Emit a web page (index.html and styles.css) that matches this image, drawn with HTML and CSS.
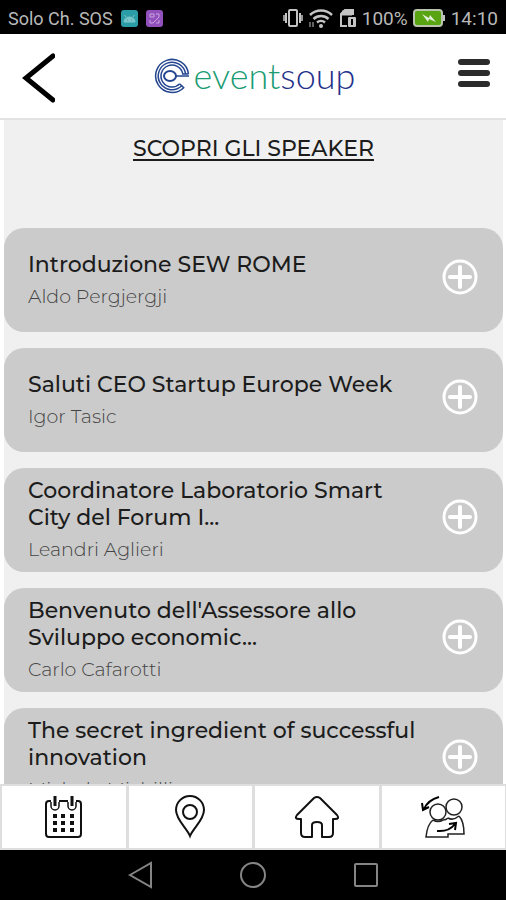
FILE: index.html
```html
<!DOCTYPE html>
<html lang="it">
<head>
    <meta charset="UTF-8">
    <meta name="viewport" content="width=device-width, initial-scale=1.0">
    <title>eventsoup - Speaker</title>
    <link rel="stylesheet" href="styles.css">
</head>
<body>
    <div class="status-bar">
        <span>Solo Ch. SOS</span>
        <svg class="app-icon" width="17" height="17" viewBox="0 0 17 17">
            <rect width="17" height="17" rx="3" fill="#2b9da6"/>
            <path d="M3 12a5.500 5 0 0 1 11 0zM5 7L3.500 5M12 7l1.500-2" fill="#7cc5ca" stroke="#7cc5ca"/>
            <path d="M6 10h1M10 10h1" stroke="#2b9da6"/>
        </svg>
        <svg class="app-icon" width="17" height="17" viewBox="0 0 17 17">
            <rect width="17" height="17" rx="3" fill="#9150bb"/>
            <path d="M4 4h4v3H4zM10 4h3v3M4 10v3h3l6-6M10 13h3v-3" fill="none" stroke="#caa5df"/>
        </svg>
        <div class="status-right">
            <svg width="20" height="18" viewBox="0 0 20 18" fill="none" stroke="#c4c4c4" stroke-width="2">
                <rect x="6" y="1" width="8" height="16" rx="1"/>
                <path d="M3 4v10M17 4v10" stroke-width="2"/>
                <path d="M1 6v6M19 6v6" stroke-width="1.500"/>
            </svg>
            <svg width="26" height="19" viewBox="0 0 26 19" fill="none" stroke="#c4c4c4" stroke-width="2.500">
                <path d="M2 6a16 16 0 0 1 22 0M5.500 10a11 11 0 0 1 15 0M9 13.500a6 6 0 0 1 8 0"/>
                <circle cx="13" cy="17" r="2" fill="#c4c4c4" stroke="none"/>
                <path d="M2 13v5M5 18v-5" stroke-width="1"/>
            </svg>
            <svg width="18" height="19" viewBox="0 0 18 19" fill="none" stroke="#c4c4c4" stroke-width="2">
                <path d="M8 17H2V5l4-4h8v5"/>
                <path d="M3 4h10" stroke-width="5"/>
                <rect x="9" y="8" width="8" height="10" rx="1" fill="#c4c4c4" stroke="none"/>
                <path d="M13 10v6" stroke="#000"/>
            </svg>
            <span>100%</span>
            <svg width="33" height="18" viewBox="0 0 33 18">
                <rect x="1" y="1" width="28" height="16" rx="3" fill="#58a511" stroke="#b9c4ae" stroke-width="2"/>
                <path d="M31 6v6" stroke="#c4c4c4" stroke-width="2"/>
                <path d="M9 5l7 4 1-3 6 7-7-3-1 3z" fill="#e4edda"/>
            </svg>
            <span>14:10</span>
        </div>
    </div>

    <header class="header">
        <button class="icon-btn" aria-label="Indietro">
            <svg width="34" height="50" viewBox="0 0 34 50" fill="none" stroke="#000" stroke-width="5" stroke-linecap="round">
                <path d="M32 3L5 25l27 22"/>
            </svg>
        </button>
        <a class="logo" href="#">
            <svg width="36" height="36" viewBox="0 0 36 36" fill="none" stroke="#24458f" stroke-width="1.500">
                <path d="M34.500 16A16.500 16.500 0 1 0 29.700 29.700L26 26"/>
                <path d="M31.600 16A13.750 13.750 0 1 0 27.700 27.700"/>
                <path d="M34.500 16H28.800A11 11 0 1 0 25.800 25.800"/>
                <ellipse cx="16" cy="18" rx="6" ry="5" stroke-width="2"/>
                <path d="M22 18h13"/>
            </svg>
            <span class="logo-event">event<span class="logo-soup">soup</span></span>
        </a>
        <button class="icon-btn" aria-label="Menu">
            <svg width="32" height="30" viewBox="0 0 32 30" stroke="#2b2b2b" stroke-width="6" stroke-linecap="round">
                <path d="M3 4h26M3 15h26M3 26h26"/>
            </svg>
        </button>
    </header>

    <main class="content">
        <a class="page-title" href="#">SCOPRI GLI SPEAKER</a>

        <div class="card">
            <div class="card-text">
                <h2>Introduzione SEW ROME</h2>
                <p>Aldo Pergjergji</p>
            </div>
            <button class="icon-btn" aria-label="Apri Introduzione SEW ROME">
                <svg class="plus" viewBox="0 0 36 36"><circle cx="18" cy="18" r="16"/><path d="M18 8v20M8 18h20"/></svg>
            </button>
        </div>

        <div class="card">
            <div class="card-text">
                <h2>Saluti CEO Startup Europe Week</h2>
                <p>Igor Tasic</p>
            </div>
            <button class="icon-btn" aria-label="Apri Saluti CEO Startup Europe Week">
                <svg class="plus" viewBox="0 0 36 36"><circle cx="18" cy="18" r="16"/><path d="M18 8v20M8 18h20"/></svg>
            </button>
        </div>

        <div class="card">
            <div class="card-text">
                <h2>Coordinatore Laboratorio Smart City del Forum I...</h2>
                <p>Leandri Aglieri</p>
            </div>
            <button class="icon-btn" aria-label="Apri Coordinatore Laboratorio Smart City">
                <svg class="plus" viewBox="0 0 36 36"><circle cx="18" cy="18" r="16"/><path d="M18 8v20M8 18h20"/></svg>
            </button>
        </div>

        <div class="card">
            <div class="card-text">
                <h2>Benvenuto dell'Assessore allo Sviluppo economic...</h2>
                <p>Carlo Cafarotti</p>
            </div>
            <button class="icon-btn" aria-label="Apri Benvenuto dell'Assessore">
                <svg class="plus" viewBox="0 0 36 36"><circle cx="18" cy="18" r="16"/><path d="M18 8v20M8 18h20"/></svg>
            </button>
        </div>

        <div class="card">
            <div class="card-text">
                <h2>The secret ingredient of successful innovation</h2>
                <p>Michele Michilli</p>
            </div>
            <button class="icon-btn" aria-label="Apri The secret ingredient">
                <svg class="plus" viewBox="0 0 36 36"><circle cx="18" cy="18" r="16"/><path d="M18 8v20M8 18h20"/></svg>
            </button>
        </div>
    </main>

    <nav class="tab-bar">
        <a href="#" aria-label="Agenda">
            <svg width="44" height="44" viewBox="0 0 44 44" fill="none" stroke="#111" stroke-width="2">
                <path d="M9 6H7a3 3 0 0 0-3 3v30a3 3 0 0 0 3 3h29a3 3 0 0 0 3-3V9a3 3 0 0 0-3-3h-2M17 6h9"/>
                <path d="M9 7v4a4 4 0 0 0 8 0V7M26 7v4a4 4 0 0 0 8 0V7" stroke-width="1.500"/>
                <path d="M13 1v10M30 1v10" stroke-width="3"/>
                <path d="M11 21h4M19 21h4M28 21h4M11 28h4M19 28h4M28 28h4M11 35h4M19 35h4M28 35h4" stroke-width="4"/>
            </svg>
        </a>
        <a href="#" aria-label="Mappa">
            <svg width="44" height="44" viewBox="0 0 44 44" fill="none" stroke="#111" stroke-width="2">
                <path d="M22 41C19 33 8 25 8 15a14 14 0 0 1 28 0c0 10-11 18-14 26z"/>
                <circle cx="22" cy="17" r="7"/>
            </svg>
        </a>
        <a href="#" aria-label="Home">
            <svg width="46" height="44" viewBox="0 0 46 44" fill="none" stroke="#111" stroke-width="2" stroke-linejoin="round">
                <path d="M20 3q3-2 6 0l17 17q3 4-2 4h-2v14q0 4-4 4h-7V30q0-3-5-3t-5 3v12h-7q-4 0-4-4V24H5q-5 0-2-4z"/>
            </svg>
        </a>
        <a href="#" aria-label="Networking">
            <svg width="44" height="44" viewBox="0 0 44 44" fill="none" stroke="#222" stroke-width="1.500">
                <circle cx="17" cy="17" r="8"/>
                <circle cx="33" cy="12" r="8"/>
                <path d="M12 25c-4 3-6 7-7 17h22v-3h16c0-9-1-14-5-18M12 25q5 3 10 0M22 25q3 0 5-2M27 23q5 3 11-2"/>
                <path d="M18 2Q7 5 3 14M1 8l1 7 6-3M16 36q12 1 18-7M28 29l7-1-1 7" stroke="#000" stroke-width="2"/>
            </svg>
        </a>
    </nav>

    <div class="android-nav">
        <button class="icon-btn" aria-label="Back">
            <svg width="26" height="28" viewBox="0 0 26 28"><path d="M3 14L24 2v24z"/></svg>
        </button>
        <button class="icon-btn" aria-label="Home">
            <svg width="28" height="28" viewBox="0 0 28 28"><circle cx="14" cy="14" r="12"/></svg>
        </button>
        <button class="icon-btn" aria-label="Recenti">
            <svg width="26" height="26" viewBox="0 0 26 26"><rect x="2" y="2" width="22" height="22" rx="1"/></svg>
        </button>
    </div>
</body>
</html>
```

FILE: styles.css
```css
* {
    box-sizing: border-box;
}

body {
    display: flex;
    flex-direction: column;
    height: 100vh;
    margin: 0;
    overflow: hidden;
    background-color: #fff;
    color: #1c1c1c;
    font-family: Montserrat, Inter, sans-serif;
}

svg {
    display: block;
    flex-shrink: 0;
}

.icon-btn {
    padding: 0;
    border: none;
    background: none;
    cursor: pointer;
}

/* Barra de estado */
.status-bar {
    display: flex;
    align-items: center;
    gap: 8px;
    flex-shrink: 0;
    height: 34px;
    padding: 2px 8px 0;
    background-color: #000;
    color: #b8b8b8;
    font-family: Roboto, sans-serif;
    font-size: 18px;
}

.status-right {
    display: flex;
    align-items: center;
    gap: 5px;
    margin-left: auto;
    font-size: 19px;
}

.header {
    display: flex;
    align-items: center;
    justify-content: space-between;
    flex-shrink: 0;
    height: 86px;
    padding: 0 16px 0 21px;
    border-bottom: 2px solid #e2e2e2;
}

.header .icon-btn {
    padding-top: 4px;
}

.header .icon-btn:last-child {
    padding: 0 0 6px;
}

.logo {
    display: flex;
    align-items: center;
    gap: 4px;
    padding-right: 4px;
    font-family: Lato, sans-serif;
    font-size: 36px;
    font-weight: 300;
    line-height: 40px;
    text-decoration: none;
}

.logo-event {
    padding-bottom: 3px;
    color: #1b9c74;
}

.logo-soup {
    color: #23318a;
}

.content {
    display: flex;
    flex-direction: column;
    gap: 16px;
    flex: 1;
    min-height: 0;
    margin: 0 3px 0 4px;
    overflow: hidden;
    background-color: #f0f0f0;
}

.page-title {
    flex-shrink: 0;
    height: 92px;
    padding-top: 15px;
    color: #1c1c1c;
    font-size: 22px;
    font-weight: 500;
    line-height: 28px;
    text-align: center;
    text-underline-offset: 3px;
}

.card {
    display: flex;
    align-items: center;
    justify-content: space-between;
    flex-shrink: 0;
    height: 104px;
    padding: 0 25px 0 24px;
    border-radius: 20px;
    background-color: #cbcbcb;
}

.card-text {
    width: 396px;
}

.card h2 {
    margin: 0;
    font-size: 22px;
    font-weight: 500;
    line-height: 27px;
}

.card p {
    margin: 6px 0 0;
    color: #444;
    font-size: 19px;
    font-weight: 300;
    line-height: 26px;
}

.card .icon-btn {
    padding-bottom: 6px;
}

.plus {
    width: 36px;
    height: 36px;
    fill: none;
    stroke: #fff;
    stroke-width: 3;
    stroke-linecap: round;
}

.plus path {
    stroke-width: 4;
}

.tab-bar {
    display: grid;
    grid-template-columns: repeat(4, 1fr);
    gap: 3px;
    flex-shrink: 0;
    height: 66px;
    padding: 2px 1px 2px 2px;
    background-color: #dedede;
}

.tab-bar a {
    display: flex;
    align-items: center;
    justify-content: center;
    background-color: #fff;
}

.android-nav {
    display: flex;
    align-items: center;
    justify-content: center;
    gap: 86px;
    flex-shrink: 0;
    height: 50px;
    background-color: #000;
}

.android-nav svg {
    fill: none;
    stroke: #858585;
    stroke-width: 2;
}
```
